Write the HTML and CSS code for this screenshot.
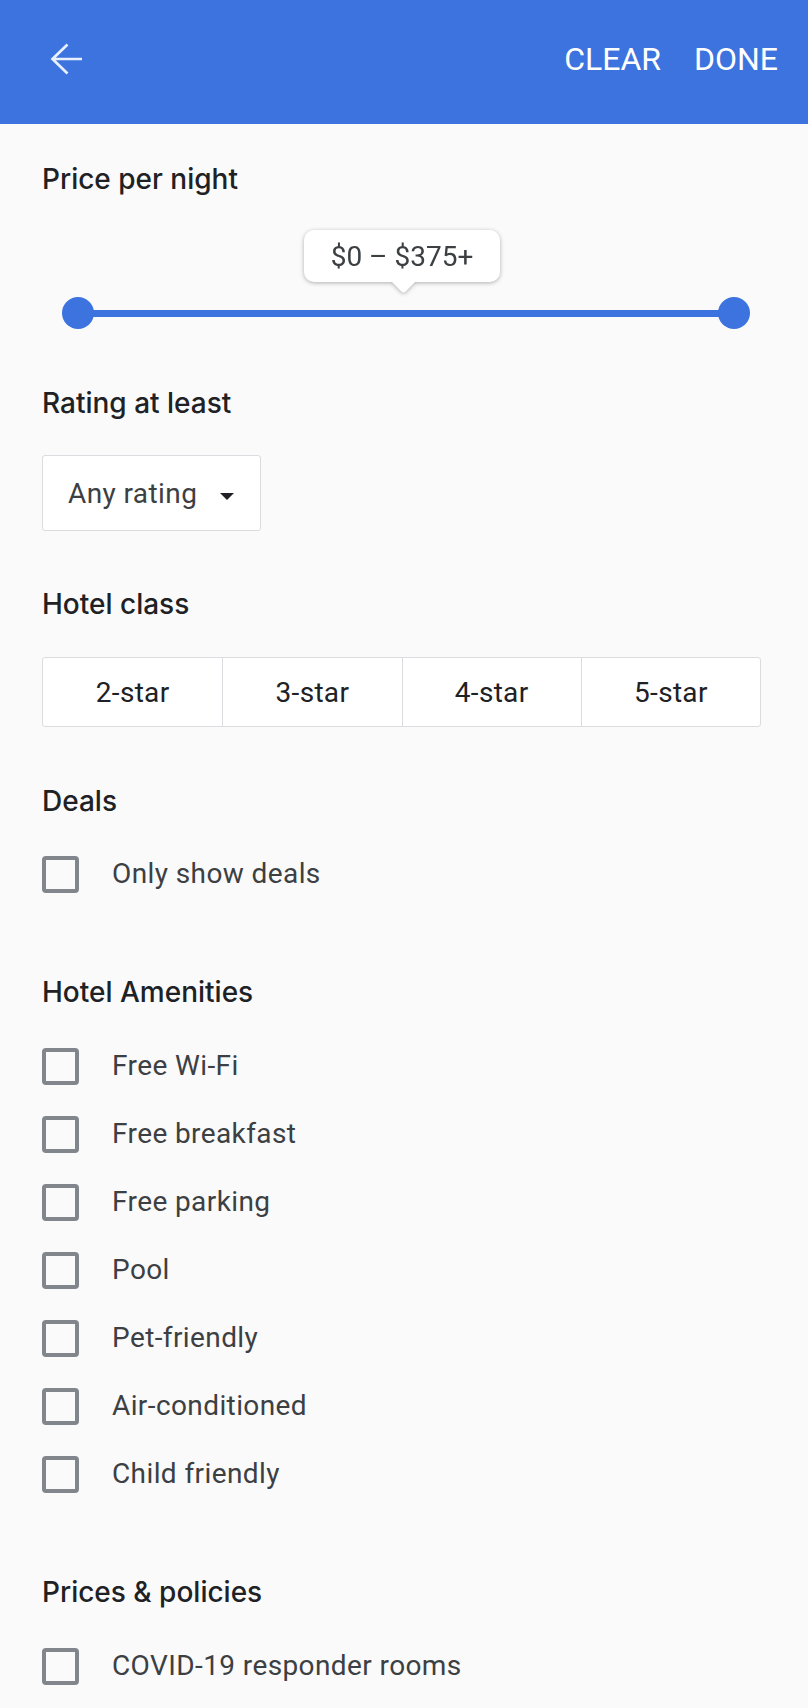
FILE: index.html
```html
<!DOCTYPE html>
<html lang="en">
<head>
<meta charset="utf-8">
<title>Filters</title>
<link rel="stylesheet" href="styles.css">
</head>
<body>
<header class="appbar">
  <button class="back" aria-label="Back">
    <svg class="back-icon" width="32" height="32" viewBox="0 0 32 32" aria-hidden="true">
      <path d="M32 16H2.5M17.5 1.5L2.5 16l15 14.5" fill="none" stroke="currentColor" stroke-width="2.7"/>
    </svg>
  </button>
  <nav class="actions">
    <span class="action">CLEAR</span>
    <span class="action">DONE</span>
  </nav>
</header>

<main class="filters">
  <section class="section section-price">
    <h2 class="heading">Price per night</h2>
    <div class="price">
      <div class="bubble">$0 – $375+</div>
      <div class="range">
        <div class="track"></div>
        <span class="thumb thumb-min"></span>
        <span class="thumb thumb-max"></span>
      </div>
    </div>
  </section>

  <section class="section section-rating">
    <h2 class="heading">Rating at least</h2>
    <div class="dropdown">
      <span class="dropdown-label">Any rating</span>
      <span class="caret"></span>
    </div>
  </section>

  <section class="section section-class">
    <h2 class="heading">Hotel class</h2>
    <div class="stars">
      <span class="star">2-star</span>
      <span class="star">3-star</span>
      <span class="star">4-star</span>
      <span class="star">5-star</span>
    </div>
  </section>

  <section class="section section-deals">
    <h2 class="heading">Deals</h2>
    <ul class="checklist checklist-first">
      <li class="check"><span class="box"></span><span class="label">Only show deals</span></li>
    </ul>
  </section>

  <section class="section section-list">
    <h2 class="heading">Hotel Amenities</h2>
    <ul class="checklist">
      <li class="check"><span class="box"></span><span class="label">Free Wi-Fi</span></li>
      <li class="check"><span class="box"></span><span class="label">Free breakfast</span></li>
      <li class="check"><span class="box"></span><span class="label">Free parking</span></li>
      <li class="check"><span class="box"></span><span class="label">Pool</span></li>
      <li class="check"><span class="box"></span><span class="label">Pet-friendly</span></li>
      <li class="check"><span class="box"></span><span class="label">Air-conditioned</span></li>
      <li class="check"><span class="box"></span><span class="label">Child friendly</span></li>
    </ul>
  </section>

  <section class="section section-list">
    <h2 class="heading">Prices &amp; policies</h2>
    <ul class="checklist">
      <li class="check"><span class="box"></span><span class="label">COVID-19 responder rooms</span></li>
    </ul>
  </section>
</main>
</body>
</html>
```

FILE: styles.css
```css
html, body {
  margin: 0;
  padding: 0;
}

body {
  background: #fafafa;
  font-family: Roboto, "Liberation Sans", Arial, sans-serif;
  color: #3c4043;
}

.appbar {
  height: 124px;
  box-sizing: border-box;
  background: #3c73de;
  display: flex;
  align-items: center;
  padding: 0 30px 7px 50px;
}

.back {
  width: 32px;
  height: 32px;
  padding: 0;
  margin: 0;
  border: 0;
  background: none;
  color: #e8f0fe;
  display: block;
}

.back-icon {
  display: block;
}

.actions {
  margin-left: auto;
  display: flex;
  gap: 33px;
}

.action {
  font-family: Roboto, "Liberation Sans", sans-serif;
  font-size: 32px;
  line-height: 36px;
  color: #ffffff;
}

.filters {
  padding: 37px 47px 0 42px;
}

.section {
  margin: 0;
}

.section-rating { margin-top: 56px; }
.section-class { margin-top: 55px; }
.section-deals { margin-top: 56px; }
.section-list { margin-top: 66px; }

.heading {
  margin: 0;
  font-family: Inter, Roboto, sans-serif;
  font-weight: 500;
  font-size: 28px;
  line-height: 36px;
  color: #202124;
}

/* price slider */
.price {
  margin-top: 33px;
  display: flex;
  flex-direction: column;
}

.bubble {
  position: relative;
  margin-left: 262px;
  width: 196px;
  height: 52px;
  display: flex;
  align-items: center;
  justify-content: center;
  background: #ffffff;
  border-radius: 10px;
  font-size: 28px;
  color: #3c4043;
  filter: drop-shadow(0 1px 2px rgba(0, 0, 0, 0.3));
}

.bubble::after {
  content: "";
  position: absolute;
  left: 50%;
  bottom: -8px;
  width: 17px;
  height: 17px;
  margin-left: -7px;
  background: #ffffff;
  border-radius: 0 0 3px 0;
  transform: rotate(45deg);
}

.range {
  position: relative;
  margin-top: 15px;
  margin-left: 20px;
  width: 688px;
  height: 32px;
}

.track {
  position: absolute;
  left: 16px;
  right: 16px;
  top: 13px;
  height: 7px;
  background: #3c73de;
}

.thumb {
  position: absolute;
  top: 0;
  width: 32px;
  height: 32px;
  border-radius: 50%;
  background: #3c73de;
}

.thumb-min { left: 0; }
.thumb-max { right: 0; }

/* dropdown */
.dropdown {
  margin-top: 34px;
  height: 76px;
  box-sizing: border-box;
  display: inline-flex;
  align-items: center;
  padding: 0 26px 0 25px;
  background: #ffffff;
  border: 1px solid #dadce0;
  border-radius: 3px;
}

.dropdown-label {
  font-size: 28px;
  letter-spacing: 0.4px;
  color: #3c4043;
}

.caret {
  margin-left: 23px;
  margin-top: 6px;
  width: 0;
  height: 0;
  border-left: 7px solid transparent;
  border-right: 7px solid transparent;
  border-top: 7px solid #202124;
}

/* hotel class */
.stars {
  margin-top: 35px;
  height: 70px;
  box-sizing: border-box;
  display: grid;
  grid-template-columns: repeat(4, 1fr);
  background: #ffffff;
  border: 1px solid #dadce0;
  border-radius: 3px;
}

.star {
  display: flex;
  align-items: center;
  justify-content: center;
  font-size: 28px;
  letter-spacing: 0.3px;
  color: #202124;
}

.star + .star {
  border-left: 1px solid #dadce0;
}

/* checkboxes */
.checklist {
  list-style: none;
  margin: 22px 0 0;
  padding: 0;
}

.checklist-first {
  margin-top: 21px;
}

.check {
  height: 68px;
  display: flex;
  align-items: center;
}

.box {
  width: 37px;
  height: 37px;
  box-sizing: border-box;
  border: 4px solid #80868b;
  border-radius: 4px;
  margin-right: 33px;
  flex: none;
}

.label {
  padding-bottom: 2px;
  font-size: 28px;
  letter-spacing: 0.4px;
  color: #3c4043;
}
```
